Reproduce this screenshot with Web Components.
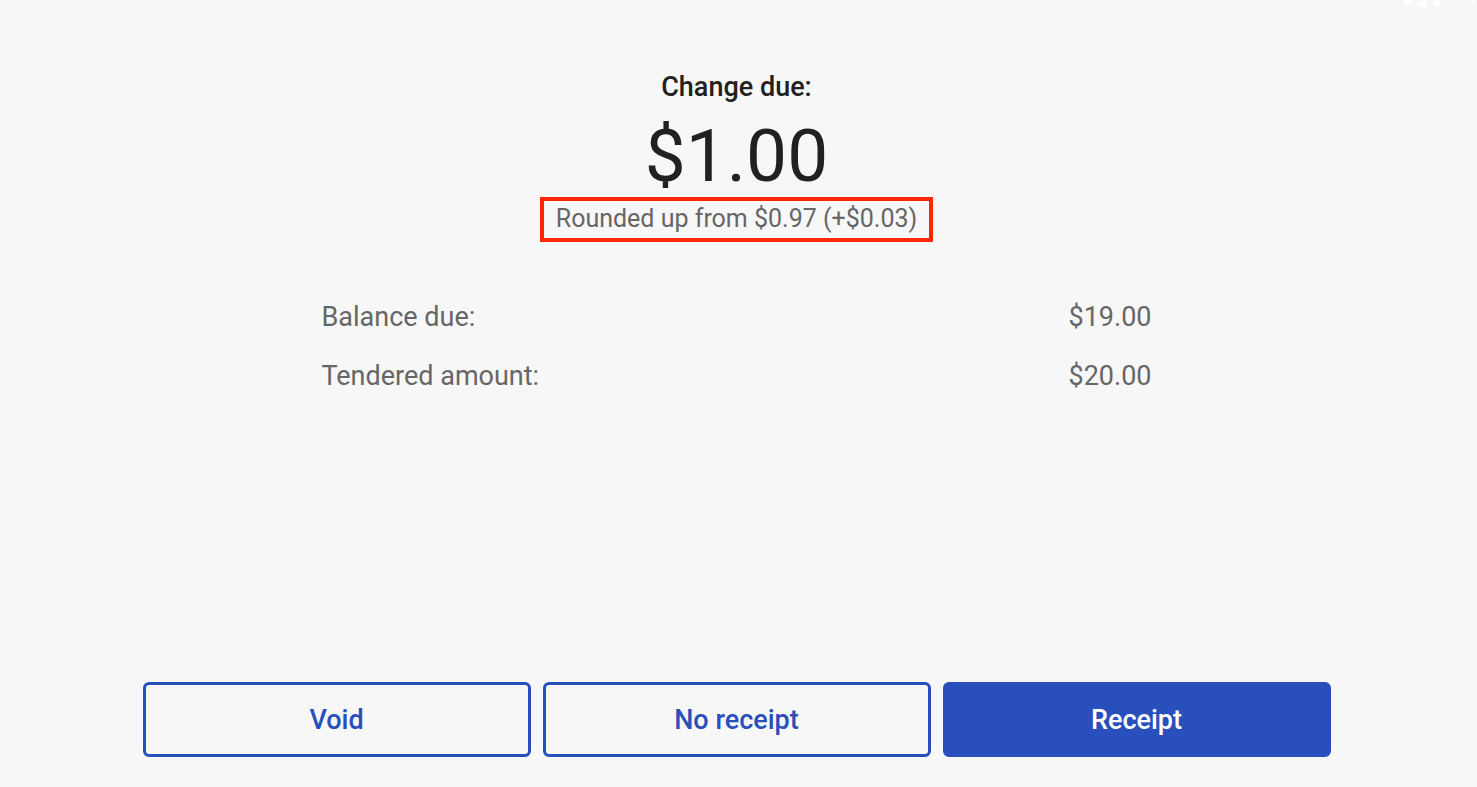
<!DOCTYPE html>
<html lang="en">
<head>
<meta charset="utf-8">
<meta name="viewport" content="width=device-width, initial-scale=1">
<title>Change due</title>
<style>
  body { margin: 0; background: #f7f7f7; color: #212121; font-family: Roboto, sans-serif; }
</style>
</head>
<body>
<change-screen>
  <status-bar slot="status">12:35</status-bar>
  <change-summary slot="summary">
    <span slot="label">Change due:</span>
    <span slot="amount">$1.00</span>
    <span slot="note">Rounded up from $0.97 (+$0.03)</span>
  </change-summary>
  <detail-row slot="details">Balance due:<span slot="value">$19.00</span></detail-row>
  <detail-row slot="details">Tendered amount:<span slot="value">$20.00</span></detail-row>
  <action-button slot="actions">Void</action-button>
  <action-button slot="actions">No receipt</action-button>
  <action-button slot="actions" primary>Receipt</action-button>
</change-screen>
<script>
  const define = (name, markup) => {
    const template = document.createElement('template');
    template.innerHTML = markup;
    customElements.define(name, class extends HTMLElement {
      constructor() {
        super();
        this.attachShadow({ mode: 'open' }).append(template.content.cloneNode(true));
      }
    });
  };

  define('change-screen', `
    <style>
      :host { display: block; position: relative; overflow: hidden; }
      main { box-sizing: border-box; min-height: 100vh; display: flex; flex-direction: column; align-items: center; padding: 72px 28px 30px 24px; }
      .details { display: flex; flex-direction: column; gap: 27px; width: 100%; max-width: 830px; margin-top: 59px; }
      .actions { display: grid; grid-template-columns: repeat(3, 1fr); gap: 12px; width: 100%; max-width: 1188px; margin-top: auto; padding-top: 32px; }
    </style>
    <slot name="status"></slot>
    <main>
      <slot name="summary"></slot>
      <section class="details"><slot name="details"></slot></section>
      <div class="actions"><slot name="actions"></slot></div>
    </main>`);

  define('status-bar', `
    <style>
      :host { position: absolute; top: -6px; right: 3px; display: flex; align-items: center; height: 14px; color: #fff; font-size: 11px; line-height: 14px; }
      svg { width: 42px; height: 14px; margin-right: 4px; }
    </style>
    <svg viewBox="0 0 42 14" fill="#fff" aria-hidden="true">
      <path d="M0 4Q6.500-1 13 4L6.500 12.500Z"/>
      <path d="M26 2V12.500H15.500Z"/>
      <path d="M32 2H34V1H37V2H39V12.500H32Z"/>
    </svg>
    <slot></slot>`);

  define('change-summary', `
    <style>
      :host { display: flex; flex-direction: column; align-items: center; text-align: center; }
      .label { margin: 0; font-size: 27px; line-height: 30px; font-weight: 500; }
      .amount { margin: 13px 0 0; font-size: 73px; line-height: 82px; }
      .note { margin: 0; padding: 3px 12px 5px; border: 4px solid #ff2600; color: #666; font-size: 25px; line-height: 29px; }
    </style>
    <h1 class="label"><slot name="label"></slot></h1>
    <p class="amount"><slot name="amount"></slot></p>
    <p class="note"><slot name="note"></slot></p>`);

  define('detail-row', `
    <style>
      :host { display: flex; justify-content: space-between; gap: 24px; color: #666; font-size: 27px; line-height: 32px; }
    </style>
    <span><slot></slot></span>
    <slot name="value"></slot>`);

  define('action-button', `
    <style>
      :host { display: block; }
      button { box-sizing: border-box; display: block; width: 100%; min-height: 75px; padding: 8px; border: 3px solid #284fbb; border-radius: 6px; background: transparent; color: #284fbb; font: 500 27px/32px Roboto, sans-serif; cursor: pointer; }
      :host([primary]) button { background: #284fbb; color: #fff; }
    </style>
    <button type="button"><slot></slot></button>`);
</script>
</body>
</html>
